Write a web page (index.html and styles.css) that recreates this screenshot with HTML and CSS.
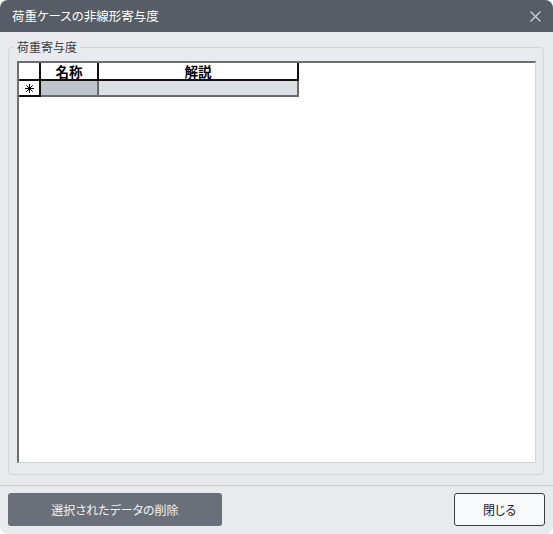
FILE: index.html
```html
<!DOCTYPE html>
<html lang="ja">
<head>
<meta charset="utf-8">
<title>荷重ケースの非線形寄与度</title>
<link rel="stylesheet" href="styles.css">
</head>
<body>
<div class="window">
  <header class="titlebar">
    <span class="title">荷重ケースの非線形寄与度</span>
    <svg class="close" width="11" height="11" viewBox="0 0 11 11">
      <path d="M0.5 0.5 L10.5 10.5 M10.5 0.5 L0.5 10.5" stroke="#d6d9dd" stroke-width="1.1" fill="none"/>
    </svg>
  </header>

  <fieldset class="group">
    <legend class="group-label">荷重寄与度</legend>
    <div class="grid-box">
      <div class="grid">
        <div class="cell head corner"></div>
        <div class="cell head">名称</div>
        <div class="cell head">解説</div>
        <div class="cell rowhead">
          <svg width="9" height="9" viewBox="0 0 9 9">
            <path d="M4.5 0 V9 M0 4.5 H9 M1.3 1.3 L7.7 7.7 M7.7 1.3 L1.3 7.7" stroke="#000" stroke-width="1" fill="none"/>
          </svg>
        </div>
        <div class="cell data name"></div>
        <div class="cell data desc"></div>
      </div>
    </div>
  </fieldset>

  <div class="separator"></div>

  <footer class="actions">
    <button class="btn btn-delete" type="button">選択されたデータの削除</button>
    <button class="btn btn-close" type="button">閉じる</button>
  </footer>
</div>
</body>
</html>
```

FILE: styles.css
```css
* { box-sizing: border-box; }

html, body {
  margin: 0;
  padding: 0;
  background: #ffffff;
}

body {
  font-family: "Noto Sans CJK JP", "Noto Sans", sans-serif;
  font-feature-settings: "palt";
}

.window {
  width: 553px;
  height: 534px;
  background: #e9eaee;
  border-radius: 8px;
  overflow: hidden;
  display: flex;
  flex-direction: column;
}

/* title bar */
.titlebar {
  height: 32px;
  flex: none;
  background: #565d66;
  display: flex;
  align-items: center;
  justify-content: space-between;
  padding: 0 12px 0 12px;
}

.title {
  color: #ffffff;
  font-size: 12.5px;
  line-height: 16px;
}

.close { display: block; }

/* group box */
.group {
  margin: 7px 9px 0 8px;
  padding: 6px 7px 11px 8px;
  border: 1px solid #d3d6db;
  border-radius: 4px;
  min-width: 0;
  flex: none;
}

.group-label {
  padding: 0 3px;
  margin-left: -3px;
  font-size: 12px;
  line-height: 16px;
  color: #3a3d42;
}

.grid-box {
  height: 402px;
  background: #ffffff;
  border-top: 2px solid #6e6e6e;
  border-left: 2px solid #6e6e6e;
  border-right: 1px solid #d2d4d8;
  border-bottom: 1px solid #d2d4d8;
}

.grid {
  display: grid;
  grid-template-columns: 22px 58px 200px;
  grid-template-rows: 18px 16px;
}

.cell {
  border-right: 2px solid #6b6b6b;
  border-bottom: 2px solid #6b6b6b;
  display: flex;
  align-items: center;
  justify-content: center;
}

.head {
  background: #ffffff;
  border-color: #111111;
  font-family: "Noto Sans CJK JP", sans-serif;
  font-weight: 700;
  font-size: 13.5px;
  line-height: 15px;
  color: #000000;
}

.rowhead {
  background: #ffffff;
  border-color: #111111;
}

.rowhead svg { display: block; }

.name { background: #c0c5cb; }
.desc { background: #dcdfe3; }

/* divider above buttons */
.separator {
  margin-top: 10px;
  height: 1px;
  flex: none;
  background: #c6cacf;
}

.actions {
  display: flex;
  justify-content: space-between;
  padding: 7px 8px 0 8px;
}

.btn {
  height: 33px;
  font-family: "Noto Sans CJK JP", "Noto Sans", sans-serif;
  font-feature-settings: "palt";
  font-size: 12px;
  border-radius: 3px;
  padding: 0;
}

.btn-delete {
  width: 214px;
  background: #6a7079;
  border: none;
  color: #f2f3f5;
}

.btn-close {
  width: 91px;
  background: #f8f9fb;
  border: 1px solid #3b3f45;
  color: #1e2024;
}
```
